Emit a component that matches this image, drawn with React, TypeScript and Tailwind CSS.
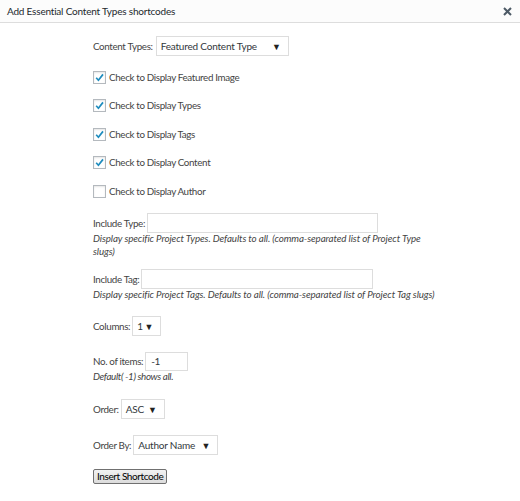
import React from "react";

const font = { fontFamily: 'Lato, "Open Sans", sans-serif' };

function Check({ checked }: { checked: boolean }) {
  return (
    <span className="flex h-[13px] w-[13px] shrink-0 items-center justify-center border border-[#b4b9be] bg-white shadow-[inset_0_1px_2px_rgba(0,0,0,0.1)]">
      {checked && (
        <svg width="11" height="11" viewBox="0 0 11 11">
          <path d="M2.2 5.8 L4.4 8.2 L9 2.4" fill="none" stroke="#1e8cbe" strokeWidth="1.7" />
        </svg>
      )}
    </span>
  );
}

function Select({ value, width }: { value: string; width: string }) {
  return (
    <span className={`flex h-[20px] items-center justify-between whitespace-nowrap border border-[#dddddd] bg-white pl-[4px] pr-[7px] text-[10px] tracking-[-0.2px] text-[#32373c] ${width}`}>
      <span>{value}</span>
      <span className="text-[9px] leading-none text-[#222]">▼</span>
    </span>
  );
}

function CheckRow({ label, checked }: { label: string; checked: boolean }) {
  return (
    <div className="flex h-[16px] items-center gap-[3px]">
      <Check checked={checked} />
      <span>{label}</span>
    </div>
  );
}

export default function App() {
  return (
    <div className="h-[501px] w-[520px] whitespace-nowrap bg-white text-[9.8px] tracking-[-0.35px] text-[#444]" style={font}>
      <div className="flex h-[23px] items-center justify-between border-b border-[#dddddd] bg-[#fcfcfc] pl-[7px] pr-[8px]">
        <span className="text-[10px] tracking-[-0.2px] text-[#23282d]">Add Essential Content Types shortcodes</span>
        <svg width="9" height="9" viewBox="0 0 9 9">
          <path d="M1 1 L8 8 M8 1 L1 8" stroke="#4d5a66" strokeWidth="2" />
        </svg>
      </div>
      <div className="flex flex-col pl-[93px] pt-[13px]">
        <div className="flex items-center gap-[3px]">
          <span>Content Types:</span>
          <Select value="Featured Content Type" width="w-[133px]" />
        </div>
        <div className="mt-[13px] flex flex-col gap-[12.5px]">
          <CheckRow label="Check to Display Featured Image" checked />
          <CheckRow label="Check to Display Types" checked />
          <CheckRow label="Check to Display Tags" checked />
          <CheckRow label="Check to Display Content" checked />
          <CheckRow label="Check to Display Author" checked={false} />
        </div>
        <div className="mt-[14px] flex items-center gap-[2px]">
          <span>Include Type:</span>
          <span className="h-[20px] w-[231px] border border-[#dddddd] bg-white" />
        </div>
        <p className="mt-[-1px] w-[340px] whitespace-normal italic leading-[13px] tracking-[-0.1px]">
          Display specific Project Types. Defaults to all. (comma-separated list of Project Type slugs)
        </p>
        <div className="mt-[11px] flex items-center gap-[2px]">
          <span>Include Tag:</span>
          <span className="h-[20px] w-[232px] border border-[#dddddd] bg-white" />
        </div>
        <p className="mt-[-1px] italic leading-[13px] tracking-[-0.1px]">
          Display specific Project Tags. Defaults to all. (comma-separated list of Project Tag slugs)
        </p>
        <div className="mt-[15px] flex items-center gap-[2px]">
          <span>Columns:</span>
          <Select value="1" width="w-[29px]" />
        </div>
        <div className="mt-[16px] flex items-center gap-[2px]">
          <span>No. of items:</span>
          <span className="flex h-[19px] w-[43px] items-center border border-[#dddddd] bg-white pl-[5px] text-[10px] text-[#32373c]">-1</span>
        </div>
        <p className="mt-[-1px] italic leading-[13px]">Default( -1) shows all.</p>
        <div className="mt-[16px] flex items-center gap-[2px]">
          <span>Order:</span>
          <Select value="ASC" width="w-[44px]" />
        </div>
        <div className="mt-[16px] flex items-center gap-[2px]">
          <span>Order By:</span>
          <Select value="Author Name" width="w-[85px]" />
        </div>
        <div className="mt-[14px]">
          <button className="h-[15px] rounded-[2px] border border-[#707070] bg-gradient-to-b from-[#f2f2f2] to-[#dcdcdc] px-[3px] text-[10px] leading-[13px] tracking-[-0.4px] text-black">
            Insert Shortcode
          </button>
        </div>
      </div>
    </div>
  );
}
